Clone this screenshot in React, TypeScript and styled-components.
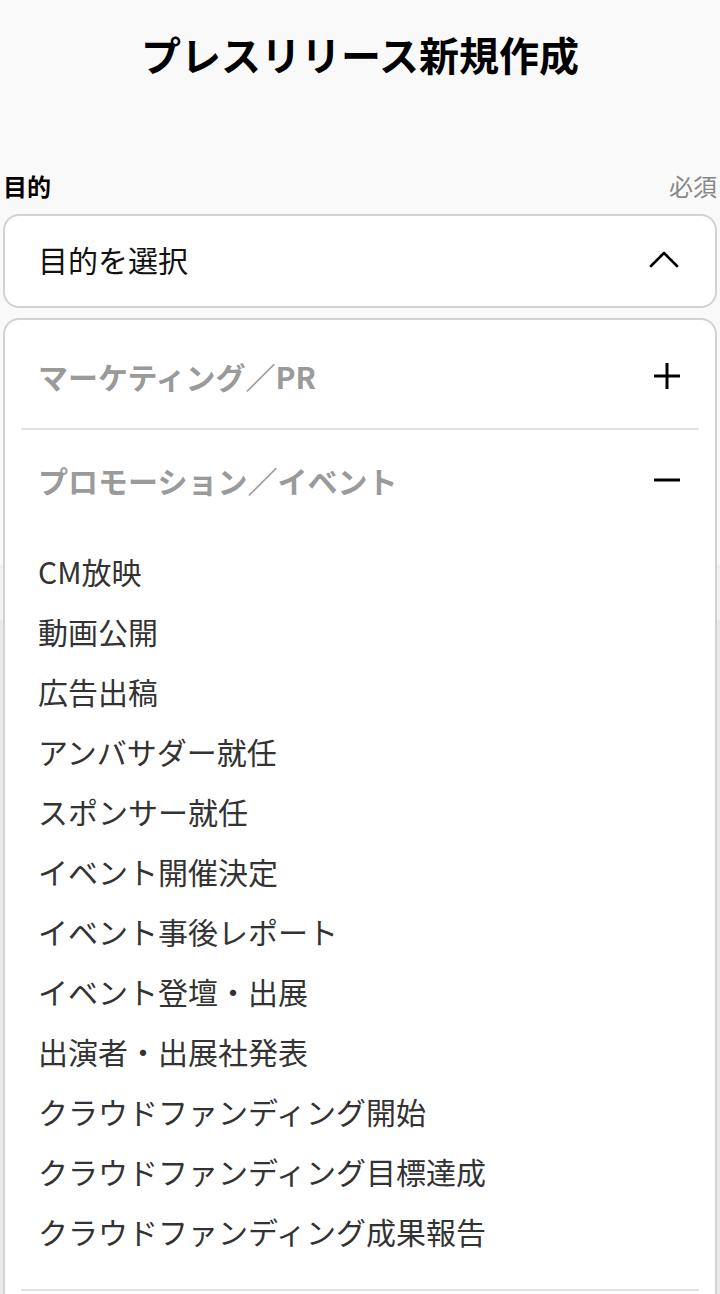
import React from 'react';
import styled, { createGlobalStyle } from 'styled-components';

const GlobalStyle = createGlobalStyle`
  html, body {
    margin: 0;
    padding: 0;
    background: #f9f9f9;
  }
  body {
    font-family: "Noto Sans CJK JP", "Noto Sans", sans-serif;
    color: #111;
  }
`;

const Page = styled.div`
  width: 720px;
  height: 1294px;
  overflow: hidden;
  padding: 0 3px;
  box-sizing: border-box;
`;

const Title = styled.h1`
  margin: 0;
  padding-top: 30px;
  font-size: 40px;
  line-height: 48px;
  font-weight: 700;
  text-align: center;
  color: #000;
`;

const LabelRow = styled.div`
  display: flex;
  justify-content: space-between;
  align-items: center;
  margin-top: 92px;
  padding: 0;
  height: 30px;
`;

const Label = styled.span`
  font-size: 24px;
  font-weight: 700;
  color: #000;
`;

const Required = styled.span`
  font-size: 24px;
  color: #888;
`;

const SelectWrap = styled.div`
  position: relative;
  margin-top: 14px;
`;

const SelectBox = styled.div`
  height: 94px;
  box-sizing: border-box;
  display: flex;
  align-items: center;
  justify-content: space-between;
  padding: 0 36px 4px 33px;
  background: #fff;
  border: 2px solid #d2d2d2;
  border-radius: 16px;
  font-size: 30px;
  color: #111;
`;

const Menu = styled.div`
  position: absolute;
  top: calc(100% + 10px);
  left: 0;
  right: 0;
  z-index: 2;
  background: #fff;
  border: 2px solid #d2d2d2;
  border-radius: 16px;
  padding: 0 16px;
  height: 1100px;
`;

const Group = styled.div`
  border-bottom: 2px solid #e2e2e2;
`;

const GroupHead = styled.div<{ $first?: boolean }>`
  display: flex;
  align-items: center;
  justify-content: space-between;
  padding: ${(p) => (p.$first ? '38px 18px 34px 17px' : '32px 18px 0 17px')};
  height: 36px;
  font-size: 30px;
  font-weight: 700;
  color: #9a9a9a;
`;

const Options = styled.ul`
  list-style: none;
  margin: 43px 0 0;
  padding: 0 0 28px 17px;
`;

const Option = styled.li`
  font-size: 30px;
  line-height: 60px;
  color: #333;
`;

const Behind = styled.div`
  margin: 257px -3px 0;
  height: 55px;
  background: #f1f1f1;
`;

const BehindRest = styled.div`
  margin: 0 -3px;
  height: 800px;
  background: #e9e9e9;
`;

const Chevron = () => (
  <svg width="30" height="18" viewBox="0 0 30 18" fill="none">
    <path d="M2 16 L15 3 L28 16" stroke="#000" strokeWidth="2.6" strokeLinecap="round" strokeLinejoin="round" />
  </svg>
);

const Plus = () => (
  <svg width="28" height="28" viewBox="0 0 28 28">
    <path d="M1 14 H27 M14 1 V27" stroke="#000" strokeWidth="3" />
  </svg>
);

const Minus = () => (
  <svg width="28" height="28" viewBox="0 0 28 28">
    <path d="M1 14 H27" stroke="#000" strokeWidth="3" />
  </svg>
);

const items = [
  'CM放映',
  '動画公開',
  '広告出稿',
  'アンバサダー就任',
  'スポンサー就任',
  'イベント開催決定',
  'イベント事後レポート',
  'イベント登壇・出展',
  '出演者・出展社発表',
  'クラウドファンディング開始',
  'クラウドファンディング目標達成',
  'クラウドファンディング成果報告',
];

export default function App() {
  return (
    <>
      <GlobalStyle />
      <Page>
        <Title>プレスリリース新規作成</Title>
        <LabelRow>
          <Label>目的</Label>
          <Required>必須</Required>
        </LabelRow>
        <SelectWrap>
          <SelectBox>
            <span>目的を選択</span>
            <Chevron />
          </SelectBox>
          <Menu>
            <Group>
              <GroupHead $first>
                <span>マーケティング／PR</span>
                <Plus />
              </GroupHead>
            </Group>
            <Group>
              <GroupHead>
                <span>プロモーション／イベント</span>
                <Minus />
              </GroupHead>
              <Options>
                {items.map((it) => (
                  <Option key={it}>{it}</Option>
                ))}
              </Options>
            </Group>
          </Menu>
        </SelectWrap>
        <Behind />
        <BehindRest />
      </Page>
    </>
  );
}
